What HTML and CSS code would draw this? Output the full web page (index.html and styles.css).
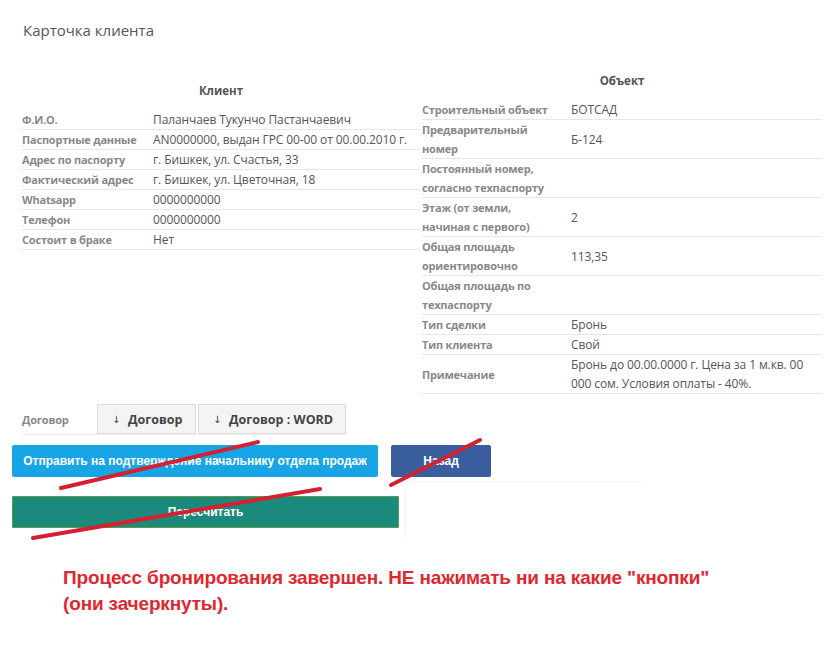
FILE: index.html
```html
<!DOCTYPE html>
<html lang="ru">
<head>
<meta charset="utf-8">
<title>Карточка клиента</title>
<link rel="stylesheet" href="styles.css">
</head>
<body>
<div class="page">
  <h1 class="title">Карточка клиента</h1>

  <div class="cards">
    <section class="card card-client">
      <h2 class="card-head">Клиент</h2>
      <table class="info info-client">
        <tr><th>Ф.И.О.</th><td>Паланчаев Тукунчо Пастанчаевич</td></tr>
        <tr><th>Паспортные данные</th><td>AN0000000, выдан ГРС 00-00 от 00.00.2010 г.</td></tr>
        <tr><th>Адрес по паспорту</th><td>г. Бишкек, ул. Счастья, 33</td></tr>
        <tr><th>Фактический адрес</th><td>г. Бишкек, ул. Цветочная, 18</td></tr>
        <tr><th>Whatsapp</th><td>0000000000</td></tr>
        <tr><th>Телефон</th><td>0000000000</td></tr>
        <tr><th>Состоит в браке</th><td>Нет</td></tr>
      </table>
    </section>

    <section class="card card-object">
      <h2 class="card-head">Объект</h2>
      <table class="info info-object">
        <tr><th>Строительный объект</th><td>БОТСАД</td></tr>
        <tr><th>Предварительный<br>номер</th><td>Б-124</td></tr>
        <tr><th>Постоянный номер,<br>согласно техпаспорту</th><td></td></tr>
        <tr><th>Этаж (от земли,<br>начиная с первого)</th><td>2</td></tr>
        <tr><th>Общая площадь<br>ориентировочно</th><td>113,35</td></tr>
        <tr><th>Общая площадь по<br>техпаспорту</th><td></td></tr>
        <tr><th>Тип сделки</th><td>Бронь</td></tr>
        <tr><th>Тип клиента</th><td>Свой</td></tr>
        <tr><th>Примечание</th><td>Бронь до 00.00.0000 г. Цена за 1 м.кв. 00<br>000 сом. Условия оплаты - 40%.</td></tr>
      </table>
    </section>
  </div>

  <div class="contract">
    <span class="contract-label">Договор</span>
    <button class="btn-dl btn-dl-pdf"><span class="arr">↓</span>Договор</button>
    <button class="btn-dl btn-dl-word"><span class="arr">↓</span>Договор : WORD</button>
  </div>

  <div class="actions">
    <div class="actions-row">
      <button class="btn btn-send">Отправить на подтверждение начальнику отдела продаж</button>
      <button class="btn btn-back">Назад</button>
    </div>
    <div class="actions-row2">
      <button class="btn btn-recalc">Пересчитать</button>
      <div class="ghost"></div>
    </div>
  </div>

  <p class="notice">Процесс бронирования завершен. НЕ нажимать ни на какие "кнопки"<br>(они зачеркнуты).</p>

  <svg class="strikes" width="824" height="645" viewBox="0 0 824 645">
    <line x1="61" y1="488" x2="258" y2="442" />
    <line x1="391" y1="485" x2="480" y2="440" />
    <line x1="33" y1="538" x2="320" y2="489" />
  </svg>
</div>
</body>
</html>
```

FILE: styles.css
```css
* { box-sizing: border-box; }

html, body {
  margin: 0;
  padding: 0;
  background: #ffffff;
}

body {
  font-family: "Open Sans", "Noto Sans", sans-serif;
  font-size: 12px;
  color: #555;
}

.page {
  position: relative;
  width: 824px;
  height: 645px;
  padding: 20px 0 0 22px;
  overflow: hidden;
}

.title {
  margin: 0;
  font-size: 15px;
  font-weight: 400;
  line-height: 20px;
  color: #555;
  padding-left: 1px;
}

.cards {
  display: flex;
  align-items: flex-start;
  gap: 2px;
  margin-top: 31px;
}

.card-client { width: 398px; margin-top: 10px; }
.card-object { width: 400px; }

.card-head {
  margin: 0 0 9px;
  font-size: 11.5px;
  font-weight: 700;
  line-height: 20px;
  text-align: center;
  color: #555;
}

.info {
  width: 100%;
  border-collapse: collapse;
}

.info th, .info td {
  padding: 0;
  line-height: 19px;
  border-bottom: 1px solid #e6e6e6;
  vertical-align: middle;
  text-align: left;
  white-space: nowrap;
}

.info th {
  font-size: 11px;
  font-weight: 700;
  letter-spacing: -0.2px;
  color: #888;
}

.info td {
  color: #555;
  letter-spacing: -0.1px;
}

.info-client th { width: 131px; }
.info-object th { width: 149px; }

.contract {
  display: flex;
  align-items: stretch;
  gap: 2px;
  width: 324px;
  height: 31px;
  margin-top: 10px;
  border-bottom: 1px solid #ececec;
}

.contract-label {
  width: 73px;
  display: flex;
  align-items: center;
  font-size: 11px;
  font-weight: 700;
  letter-spacing: -0.2px;
  color: #888;
}

.btn-dl {
  height: 30px;
  padding: 0 0 0 14px;
  background: #f4f4f4;
  border: 1px solid #dcdcdc;
  font-family: "Open Sans", sans-serif;
  font-size: 12.5px;
  font-weight: 700;
  color: #444;
  display: flex;
  align-items: center;
  white-space: nowrap;
}

.btn-dl-pdf { width: 99px; }
.btn-dl-word { width: 148px; }

.arr {
  font-family: "DejaVu Sans", sans-serif;
  font-size: 10px;
  font-weight: 400;
  width: 6px;
  margin-right: 10px;
  color: #444;
}

.actions {
  margin-left: -10px;
  margin-top: 10px;
}

.actions-row {
  display: flex;
  gap: 13px;
}

.btn {
  height: 32px;
  padding: 0;
  border: none;
  border-radius: 2px;
  color: #fff;
  font-family: "Liberation Sans", Arial, sans-serif;
  font-size: 12px;
  font-weight: 700;
  white-space: nowrap;
}

.btn-send {
  width: 366px;
  background: #17a5e6;
}

.btn-back {
  width: 100px;
  background: #3a5d9e;
}

.actions-row2 {
  display: flex;
  margin-top: 19px;
}

.btn-recalc {
  width: 387px;
  background: #1b8a7c;
  border: 1px solid #5f9a3c;
  border-radius: 1px;
}

.ghost {
  width: 236px;
  height: 58px;
  margin-top: -15px;
  margin-left: 6px;
  border-top: 1px solid #f3f3f3;
  border-left: 1px solid #f3f3f3;
}

.notice {
  margin: 26px 0 0 41px;
  font-family: "Liberation Sans", Arial, sans-serif;
  font-size: 19px;
  font-weight: 700;
  line-height: 26px;
  letter-spacing: -0.15px;
  color: #e1262d;
}

.strikes {
  position: absolute;
  left: 0;
  top: 0;
  pointer-events: none;
}

.strikes line {
  stroke: #d6202f;
  stroke-width: 4;
  stroke-linecap: round;
}
```
